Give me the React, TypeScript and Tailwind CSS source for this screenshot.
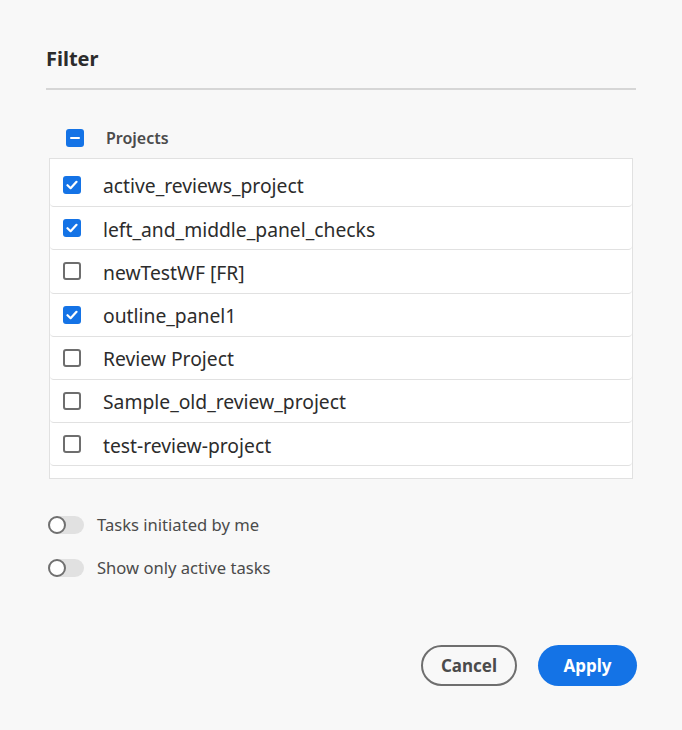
import React from "react";

const projects = [
  { name: "active_reviews_project", checked: true },
  { name: "left_and_middle_panel_checks", checked: true },
  { name: "newTestWF [FR]", checked: false },
  { name: "outline_panel1", checked: true },
  { name: "Review Project", checked: false },
  { name: "Sample_old_review_project", checked: false },
  { name: "test-review-project", checked: false },
];

function Check({ checked }: { checked: boolean }) {
  if (checked) {
    return (
      <div className="w-[18px] h-[18px] rounded-[3px] bg-[#1473e6] flex items-center justify-center shrink-0">
        <svg width="12" height="10" viewBox="0 0 12 10">
          <path d="M1.5 5.2 L4.6 8.2 L10.5 1.8" stroke="white" strokeWidth="2.2" fill="none" strokeLinecap="round" strokeLinejoin="round" />
        </svg>
      </div>
    );
  }
  return <div className="w-[18px] h-[18px] rounded-[3px] border-2 border-[#6e6e6e] bg-white shrink-0" />;
}

function Toggle({ label }: { label: string }) {
  return (
    <div className="flex items-center h-[22px]">
      <div className="relative w-[36px] h-[18px] rounded-full bg-[#e1e1e1] shrink-0">
        <div className="absolute left-0 top-0 w-[18px] h-[18px] rounded-full border-2 border-[#707070] bg-white" />
      </div>
      <span className="ml-[13px] text-[16.6px] text-[#4b4b4b]">{label}</span>
    </div>
  );
}

export default function App() {
  return (
    <div
      className="w-[682px] h-[730px] bg-[#f8f8f8] relative"
      style={{ fontFamily: '"Source Sans Pro", "Noto Sans", sans-serif' }}
    >
      <div className="pl-[46px] pr-[46px] pt-[44px]">
        <h1 className="text-[20px] leading-[30px] font-bold text-[#2c2c2c]">Filter</h1>
        <div className="mt-[14px] h-[2px] bg-[#d6d6d6]" />
        <div className="mt-[37px] flex items-center pl-[20px] h-[22px]">
          <div className="w-[18px] h-[18px] rounded-[3px] bg-[#1473e6] flex items-center justify-center">
            <div className="w-[10px] h-[2px] bg-white rounded" />
          </div>
          <span className="ml-[22px] text-[16px] font-semibold text-[#4b4b4b]">Projects</span>
        </div>
        <div className="mt-[9px] ml-[3px] mr-[3px] border border-[#e1e1e1] bg-white pt-[5px] pb-[12px]">
          {projects.map((p) => (
            <div
              key={p.name}
              className="h-[43.2px] flex items-center pl-[13px] border-b border-[#e1e1e1] rounded-b-[4px]"
            >
              <Check checked={p.checked} />
              <span className="ml-[22px] text-[19.3px] text-[#2c2c2c] leading-none pt-[2px]">{p.name}</span>
            </div>
          ))}
        </div>
        <div className="mt-[35px] ml-[2px] flex flex-col gap-[21px]">
          <Toggle label="Tasks initiated by me" />
          <Toggle label="Show only active tasks" />
        </div>
        <div className="mt-[66px] -mr-[1px] flex justify-end gap-[21px]">
          <button className="w-[96px] h-[41px] rounded-full border-2 border-[#6e6e6e] text-[17px] font-bold text-[#4b4b4b]">
            Cancel
          </button>
          <button className="w-[99px] h-[41px] rounded-full bg-[#1473e6] text-[17px] font-bold text-white">
            Apply
          </button>
        </div>
      </div>
    </div>
  );
}
